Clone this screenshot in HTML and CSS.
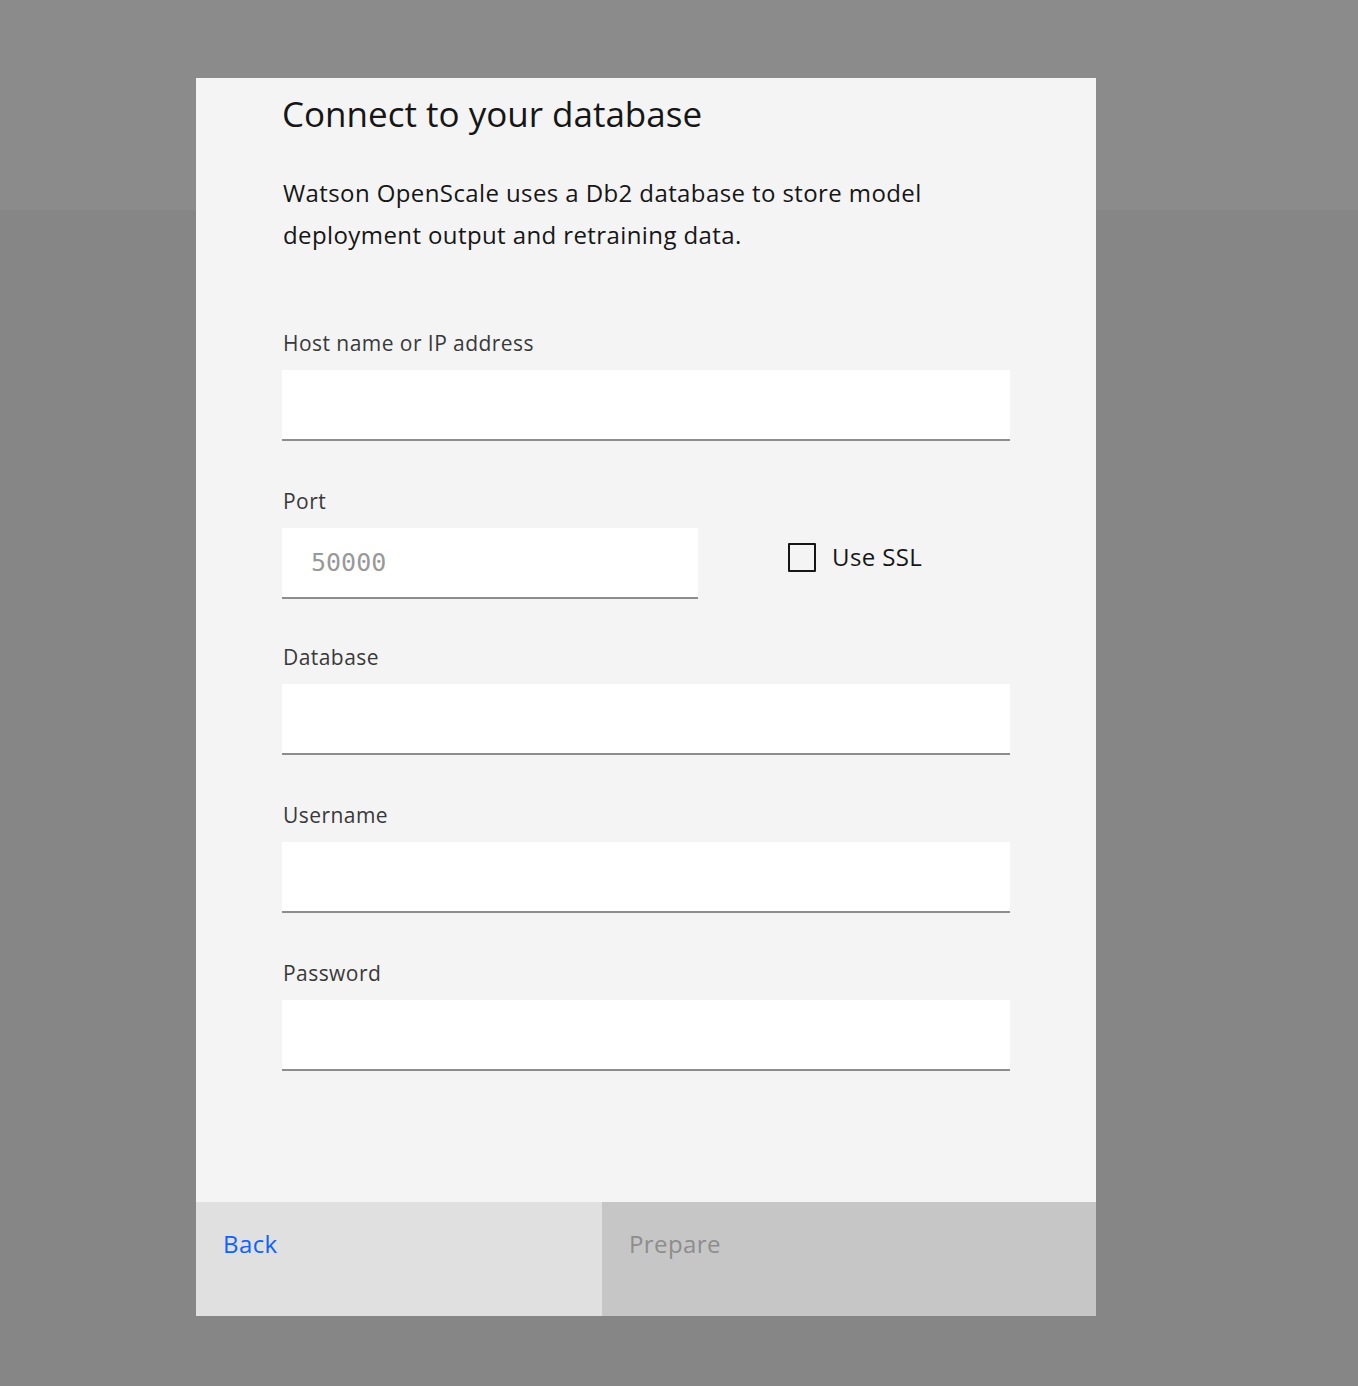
FILE: index.html
```html
<!DOCTYPE html>
<html lang="en">
<head>
<meta charset="utf-8">
<title>Connect to your database</title>
<link rel="stylesheet" href="styles.css">
</head>
<body>
<div class="modal">
  <div class="modal-body">
    <h2 class="title">Connect to your database</h2>
    <p class="desc">Watson OpenScale uses a Db2 database to store model deployment output and retraining data.</p>
    <form class="form">
      <div class="field">
        <label class="label">Host name or IP address</label>
        <input class="input" type="text">
      </div>
      <div class="field field-port">
        <label class="label">Port</label>
        <div class="port-row">
          <input class="input input-port" type="text" placeholder="50000">
          <label class="check">
            <span class="check-box"></span>
            <span class="check-text">Use SSL</span>
          </label>
        </div>
      </div>
      <div class="field">
        <label class="label">Database</label>
        <input class="input" type="text">
      </div>
      <div class="field">
        <label class="label">Username</label>
        <input class="input" type="text">
      </div>
      <div class="field">
        <label class="label">Password</label>
        <input class="input" type="password">
      </div>
    </form>
  </div>
  <div class="footer">
    <button class="btn btn-back" type="button">Back</button>
    <button class="btn btn-prepare" type="button">Prepare</button>
  </div>
</div>
</body>
</html>
```

FILE: styles.css
```css
html, body {
  margin: 0;
  padding: 0;
}
body {
  min-height: 1386px;
  background: linear-gradient(#8b8b8b 0, #8b8b8b 210px, #868686 210px, #868686 100%);
  font-family: "Open Sans", "Liberation Sans", sans-serif;
  color: #161616;
  padding-top: 78px;
  padding-left: 196px;
  box-sizing: border-box;
}
.modal {
  width: 900px;
  height: 1238px;
  background: #f4f4f4;
  display: flex;
  flex-direction: column;
}
.modal-body {
  flex: 1;
  padding: 12px 86px 0 86px;
}
.title {
  margin: 0;
  font-size: 35px;
  line-height: 48px;
  font-weight: 400;
  color: #161616;
  letter-spacing: 0;
}
.desc {
  margin: 34px 0 0 1px;
  font-size: 24px;
  line-height: 42px;
  letter-spacing: 0.4px;
  color: #161616;
  max-width: 700px;
}
.form {
  margin-top: 75px;
  display: flex;
  flex-direction: column;
}
.field {
  display: flex;
  flex-direction: column;
  margin-bottom: 48px;
}
.field-port {
  margin-bottom: 46px;
}
.label {
  display: block;
  font-size: 21px;
  line-height: 24px;
  color: #393939;
  margin: 0 0 15px 1px;
  letter-spacing: 0.45px;
}
.input {
  display: block;
  width: 728px;
  height: 71px;
  box-sizing: border-box;
  border: none;
  border-bottom: 2px solid #8d8d8d;
  background: #ffffff;
  margin: 0;
  padding: 0 29px;
  font-family: "DejaVu Sans Mono", "Liberation Mono", monospace;
  font-size: 25px;
  color: #161616;
  outline: none;
}
.input::placeholder {
  color: #999999;
}
.port-row {
  display: flex;
  align-items: flex-start;
  gap: 90px;
}
.input-port {
  width: 416px;
}
.check {
  display: flex;
  align-items: center;
  gap: 16px;
  margin-top: 14px;
}
.check-box {
  width: 28px;
  height: 29px;
  box-sizing: border-box;
  border: 2px solid #161616;
  border-radius: 1px;
}
.check-text {
  font-size: 24px;
  line-height: 30px;
  letter-spacing: 0.4px;
  color: #161616;
}
.footer {
  display: flex;
  height: 114px;
}
.btn {
  border: none;
  margin: 0;
  text-align: left;
  font-family: "Open Sans", "Liberation Sans", sans-serif;
  font-size: 24px;
  line-height: 30px;
  letter-spacing: 0.4px;
  padding: 27px 27px 0;
  display: flex;
  align-items: flex-start;
}
.btn-back {
  width: 406px;
  background: #e0e0e0;
  color: #0f62fe;
}
.btn-prepare {
  flex: 1;
  background: #c6c6c6;
  color: #8d8d8d;
}
```
